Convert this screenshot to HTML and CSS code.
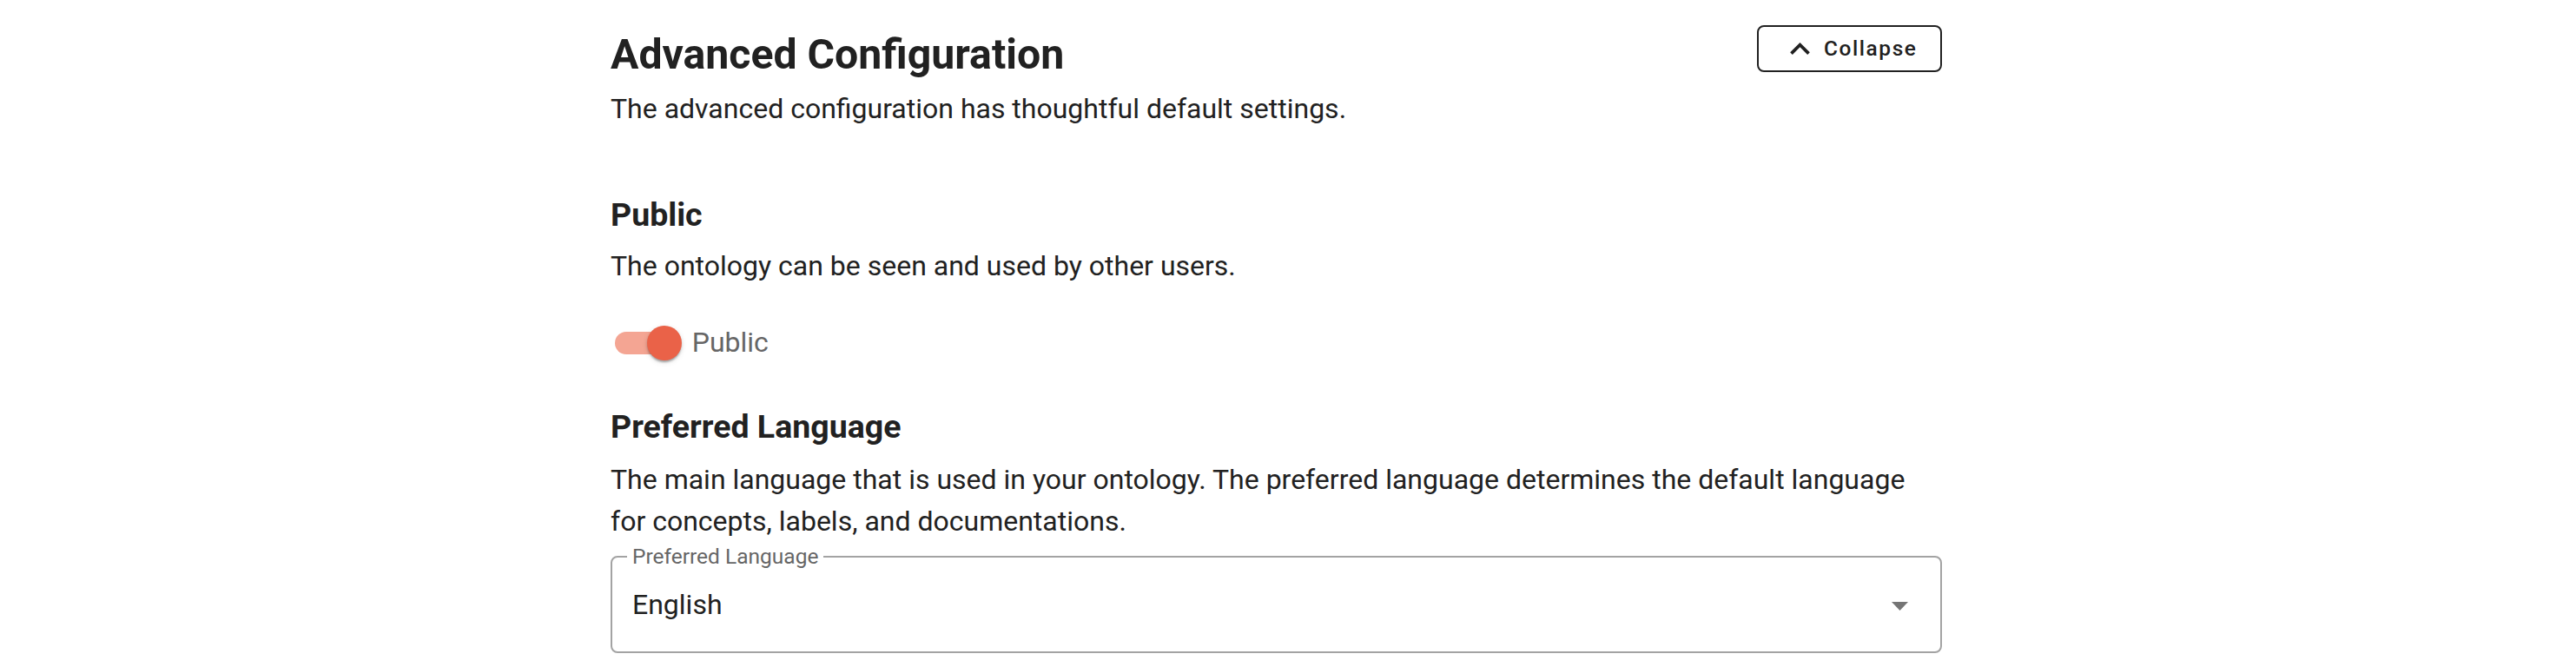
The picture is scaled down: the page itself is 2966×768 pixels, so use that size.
FILE: index.html
```html
<!DOCTYPE html>
<html lang="en">
<head>
<meta charset="utf-8">
<title>Advanced Configuration</title>
<link rel="stylesheet" href="styles.css">
</head>
<body>
<main class="page">
  <header class="header">
    <div class="header-text">
      <h1 class="title">Advanced Configuration</h1>
      <p class="text subtitle">The advanced configuration has thoughtful default settings.</p>
    </div>
    <button class="collapse-btn" type="button">
      <svg class="chevron" viewBox="6 8 12 7.41" width="23" height="14" aria-hidden="true"><path d="M12 8l-6 6 1.41 1.41L12 10.83l4.59 4.58L18 14z"/></svg>
      <span>Collapse</span>
    </button>
  </header>

  <section class="section public-section">
    <h2 class="section-title">Public</h2>
    <p class="text">The ontology can be seen and used by other users.</p>
    <label class="switch-row">
      <span class="switch"><span class="track"></span><span class="thumb"></span></span>
      <span class="switch-label">Public</span>
    </label>
  </section>

  <section class="section lang-section">
    <h2 class="section-title">Preferred Language</h2>
    <p class="text">The main language that is used in your ontology. The preferred language determines the default language for concepts, labels, and documentations.</p>
    <fieldset class="select">
      <legend class="select-label">Preferred Language</legend>
      <div class="select-row">
        <span class="select-value">English</span>
        <svg class="select-arrow" viewBox="0 0 19 10" width="19" height="10" aria-hidden="true"><path d="M0 0H19L9.5 10Z"/></svg>
      </div>
    </fieldset>
  </section>
</main>
</body>
</html>
```
FILE: styles.css
```css
html, body {
  margin: 0;
  padding: 0;
  background: #ffffff;
}

body {
  font-family: Roboto, "Noto Sans", "Liberation Sans", sans-serif;
  color: #212121;
}

.page {
  width: 1533px;
  margin-left: 703px;
  padding-top: 29px;
}

.header {
  display: flex;
  justify-content: space-between;
  align-items: flex-start;
}

.title {
  margin: 5px 0 0 0;
  font-size: 48.2px;
  line-height: 58.5px;
  font-weight: 700;
}

.text {
  margin: 0;
  font-size: 32px;
  line-height: 48px;
  font-weight: 400;
}

.subtitle {
  margin-top: 8px;
}

.collapse-btn {
  display: inline-flex;
  align-items: center;
  gap: 16px;
  height: 54px;
  width: 213px;
  box-sizing: border-box;
  padding: 0 0 0 36px;
  border: 2px solid #212121;
  border-radius: 8px;
  background: #ffffff;
  color: #212121;
  font-family: Roboto, "Noto Sans", sans-serif;
  font-size: 24.4px;
  font-weight: 500;
  letter-spacing: 1.6px;
  line-height: 1;
}

.chevron {
  fill: #212121;
  flex: none;
}

.section-title {
  margin: 0 0 11.5px 0;
  font-size: 37.5px;
  line-height: 45px;
  font-weight: 700;
}

.public-section {
  margin-top: 76.5px;
}

.switch-row {
  display: flex;
  align-items: center;
  height: 71px;
  margin-top: 29.5px;
}

.switch {
  display: flex;
  align-items: center;
  margin-left: 4.7px;
}

.track {
  width: 64px;
  height: 26px;
  border-radius: 13px;
  background: #f4a593;
}

.thumb {
  width: 40px;
  height: 40px;
  margin-left: -27px;
  border-radius: 50%;
  background: #ea6248;
  box-shadow: 0 3px 2px -1px rgba(0,0,0,0.2), 0 2px 3px 0 rgba(0,0,0,0.14), 0 2px 6px 0 rgba(0,0,0,0.12);
}

.switch-label {
  margin-left: 12px;
  font-size: 32px;
  line-height: 45px;
  color: #666666;
}

.lang-section {
  margin-top: 39px;
}

.lang-section .section-title {
  margin-bottom: 13.5px;
}

.select {
  margin: 3px 0 0 0;
  padding: 0 37px 0 23px;
  border: 2px solid #a3a3a3;
  border-radius: 8px;
  min-width: 0;
}

.select-label {
  margin-left: -6px;
  padding: 0 6px;
  font-size: 24.5px;
  line-height: 28px;
  color: #666666;
}

.select-row {
  display: flex;
  align-items: center;
  justify-content: space-between;
  height: 83px;
  padding-bottom: 12px;
}

.select-value {
  font-size: 32px;
  line-height: 40px;
  color: #212121;
}

.select-arrow {
  fill: #757575;
  flex: none;
  margin-top: 4px;
}
```
